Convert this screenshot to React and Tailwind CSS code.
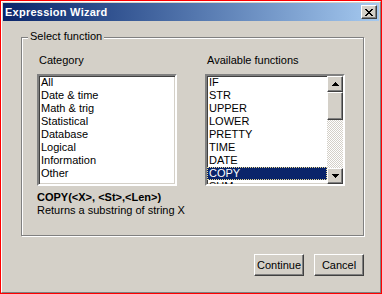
import React from "react";

const categories = [
  "All",
  "Date & time",
  "Math & trig",
  "Statistical",
  "Database",
  "Logical",
  "Information",
  "Other",
];

const functions = ["IF", "STR", "UPPER", "LOWER", "PRETTY", "TIME", "DATE", "COPY", "SUM"];

// classic raised 3D edge (buttons, scrollbar parts)
const raised =
  "border border-t-white border-l-white border-r-[#404040] border-b-[#404040] shadow-[inset_-1px_-1px_0_#808080]";

// classic sunken edge (list boxes)
const sunken =
  "border-2 border-t-[#808080] border-l-[#808080] border-r-white border-b-white shadow-[inset_1px_1px_0_#404040,inset_-1px_-1px_0_#d4d0c8]";

function Arrow({ down }) {
  return (
    <svg width="7" height="4" viewBox="0 0 7 4" className={down ? "rotate-180" : ""}>
      <path d="M3 0h1v1h1v1h1v1h1v1H0V3h1V2h1V1h1z" fill="#000" />
    </svg>
  );
}

function Button({ children }) {
  return (
    <button
      className={`w-[50px] h-[22px] bg-[#d4d0c8] text-black text-[11px] leading-[13px] ${raised}`}
    >
      {children}
    </button>
  );
}

export default function App() {
  return (
    <div
      className="w-[382px] h-[294px] border border-[#ff0000] bg-[#d4d0c8] text-black"
      style={{ fontFamily: '"Liberation Sans", Arial, sans-serif' }}
    >
      <div className="h-full flex flex-col p-px border border-t-white border-l-white border-r-[#808080] border-b-[#808080]">
        {/* Title bar */}
        <div className="h-[18px] shrink-0 flex items-center justify-between pl-[2px] pr-[2px] bg-gradient-to-r from-[#0a246a] to-[#a6caf0]">
          <span className="text-white font-bold text-[11px] tracking-[0.25px]">Expression Wizard</span>
          <div className={`w-[16px] h-[14px] bg-[#d4d0c8] flex items-center justify-center ${raised}`}>
            <svg width="8" height="7" viewBox="0 0 8 7">
              <path
                d="M0 0h2v1h1v1h2V1h1V0h2v1H7v1H6v1H5v1h1v1h1v1h1v1H6V6H5V5H3v1H2v1H0V6h1V5h1V4h1V3H2V2H1V1H0z"
                fill="#000"
              />
            </svg>
          </div>
        </div>

        {/* Body */}
        <div className="flex-1 flex flex-col pl-[18px] pr-[15px] pt-[16px]">
          {/* Group box */}
          <div className="relative h-[199px] border border-[#808080] shadow-[inset_1px_1px_0_#fff,1px_1px_0_#fff] pl-[15px] pt-[16px]">
            <span className="absolute -top-[8px] left-[6px] px-[2px] bg-[#d4d0c8] text-[11px] leading-[13px]">
              Select function
            </span>

            <div className="flex gap-[28px]">
              {/* Category */}
              <div className="w-[140px]">
                <div className="pl-[2px] text-[11px] leading-[13px] mb-[7px]">Category</div>
                <div className={`h-[112px] bg-white ${sunken}`}>
                  {categories.map((c) => (
                    <div key={c} className="h-[13px] pl-[2px] text-[11px] leading-[13px]">
                      {c}
                    </div>
                  ))}
                </div>
              </div>

              {/* Available functions */}
              <div className="w-[140px]">
                <div className="pl-[2px] text-[11px] leading-[13px] mb-[7px]">Available functions</div>
                <div className={`h-[112px] bg-white flex ${sunken}`}>
                  <div className="flex-1 overflow-hidden">
                    {functions.map((f) => (
                      <div
                        key={f}
                        className={`h-[13px] pl-[2px] text-[11px] leading-[13px] ${
                          f === "COPY"
                            ? "bg-[#0a246a] text-white outline-1 outline-dotted outline-[#e8d890] -outline-offset-1"
                            : ""
                        }`}
                      >
                        {f}
                      </div>
                    ))}
                  </div>
                  {/* Scrollbar */}
                  <div className="w-[16px] flex flex-col">
                    <div className={`h-[16px] bg-[#d4d0c8] flex items-center justify-center ${raised}`}>
                      <Arrow />
                    </div>
                    <div className={`h-[28px] bg-[#d4d0c8] ${raised}`} />
                    <div className="flex-1 bg-[repeating-conic-gradient(#d4d0c8_0_25%,#fff_0_50%)] bg-[length:2px_2px]" />
                    <div className={`h-[16px] bg-[#d4d0c8] flex items-center justify-center ${raised}`}>
                      <Arrow down />
                    </div>
                  </div>
                </div>
              </div>
            </div>

            <div className="mt-[5px] text-[11px] leading-[13px]">
              <div className="font-bold">COPY(&lt;X&gt;, &lt;St&gt;,&lt;Len&gt;)</div>
              <div>Returns a substring of string X</div>
            </div>
          </div>

          {/* Buttons */}
          <div className="flex justify-end gap-[10px] mt-[18px] pr-[-1px]">
            <Button>Continue</Button>
            <Button>Cancel</Button>
          </div>
        </div>
      </div>
    </div>
  );
}
